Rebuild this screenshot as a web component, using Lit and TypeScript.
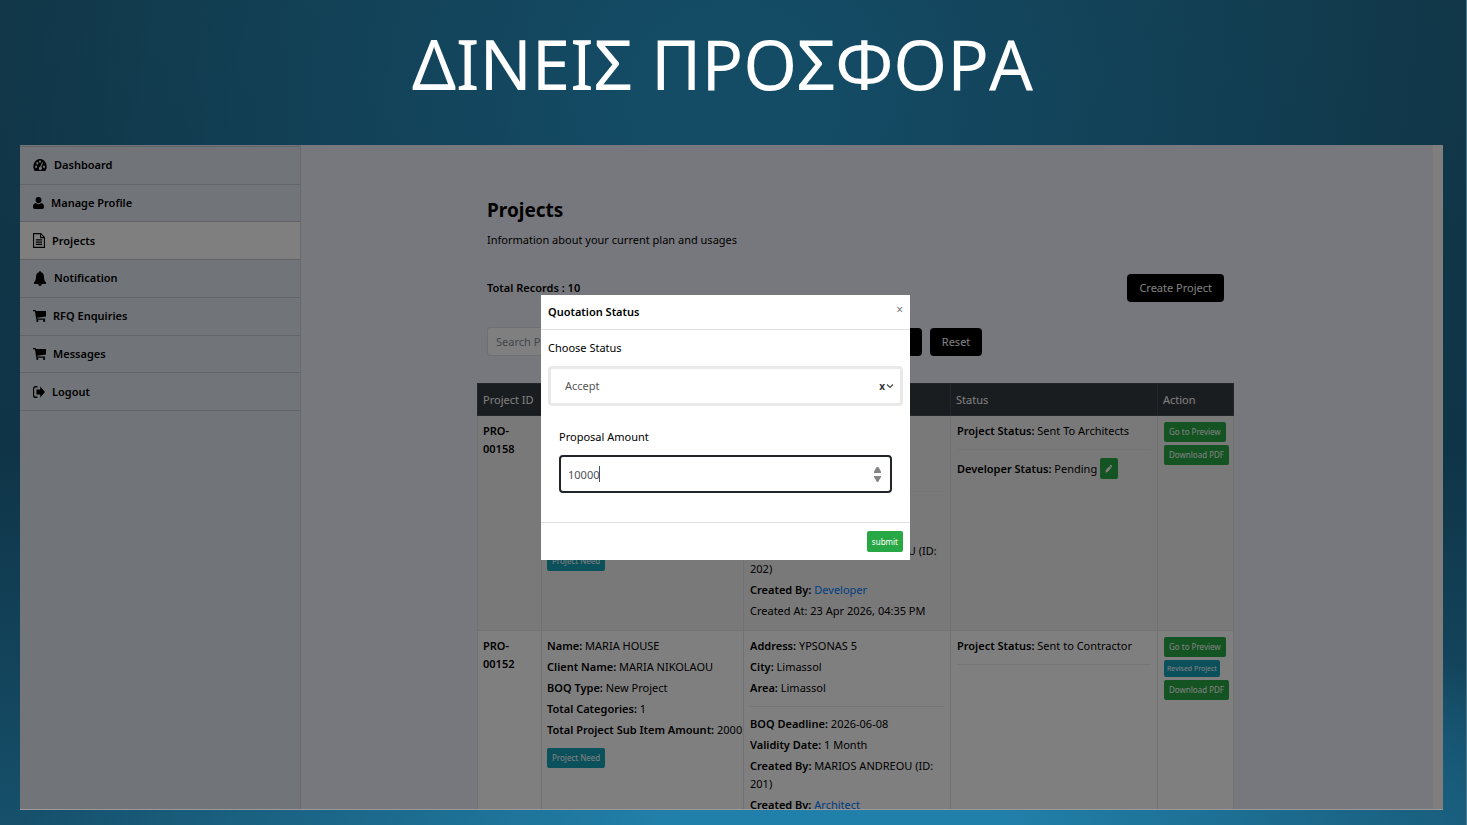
import { LitElement, html, css, svg, nothing } from "lit";
import { customElement, state } from "lit/decorators.js";

const icons = {
  gauge: {
    box: "0 2 16 12", w: 14, h: 12,
    art: svg`<path fill-rule="evenodd" d="M8 2a7.600 7.600 0 0 0-6.500 11.500c.2.300.4.500.8.500h11.400c.4 0 .6-.2.8-.5A7.600 7.600 0 0 0 8 2zM3.500 8.600a1.200 1.200 0 1 1 0 2.400 1.200 1.200 0 0 1 0-2.400zM4.900 5a1.200 1.200 0 1 1 0 2.400 1.200 1.200 0 0 1 0-2.400zM8 3.400a1.200 1.200 0 1 1 0 2.400 1.200 1.200 0 0 1 0-2.400zM12.500 8.600a1.200 1.200 0 1 1 0 2.400 1.200 1.200 0 0 1 0-2.400zM10.500 5.300l1 .4-2 4.400a1.700 1.700 0 1 1-1.300-.4z"/>`,
  },
  user: {
    box: "1.500 1 13 14", w: 11, h: 12,
    art: svg`<path d="M8 1a3.500 3.500 0 0 1 3.500 3.600C11.500 6.700 10 8.400 8 8.400S4.500 6.700 4.500 4.600A3.500 3.500 0 0 1 8 1zM5 8a4.300 4.300 0 0 0 6 0c2.600.3 3.500 2.300 3.500 4.700 0 1.300-.9 2.300-2.100 2.300H3.600c-1.200 0-2.100-1-2.100-2.300C1.500 10.300 2.400 8.300 5 8z"/>`,
  },
  file: {
    box: "1.400 .2 13.200 15.600", w: 12, h: 15,
    art: svg`<path fill="none" stroke="currentColor" stroke-width="1.200" d="M2 .8h8l4 4v10.400H2zM9.800 1v4H14M4.500 7.300h7M4.500 9.700h7M4.500 12.100h7"/>`,
  },
  bell: {
    box: "0 0 16 15.700", w: 14, h: 15,
    art: svg`<path d="M8 0c.7 0 1.100.5 1 1.200 2.300.5 3.600 2.300 3.600 4.800 0 3.400 1 5 2.600 6.300 0 .7-.5 1.200-1.200 1.200h-4A2 2 0 0 1 8 15.700a2 2 0 0 1-2-2.200H2c-.7 0-1.200-.5-1.200-1.200C2.400 11 3.400 9.400 3.400 6c0-2.500 1.300-4.300 3.600-4.800C6.900.5 7.300 0 8 0z"/>`,
  },
  cart: {
    box: ".5 1.500 15 13.500", w: 13, h: 12,
    art: svg`<path d="M.5 1.500h2.700c.5 0 .7.400.8 1.100h11.500v6.200L5.300 10.100l.2 1.100h9v1.200H4.300L2.700 2.800H.5zM5.500 12.600a1.200 1.200 0 1 1 0 2.400 1.200 1.200 0 0 1 0-2.400zM13.300 12.600a1.200 1.200 0 1 1 0 2.400 1.200 1.200 0 0 1 0-2.400z"/>`,
  },
  logout: {
    box: ".8 1.800 14.500 11.900", w: 12, h: 12,
    art: svg`<path fill="none" stroke="currentColor" stroke-width="1.400" d="M6.200 2.500H3.600A2.100 2.100 0 0 0 1.500 4.600v6.300A2.100 2.100 0 0 0 3.600 13h2.600"/><path d="M9.500 2.300l5.800 5.500-5.800 5.500V10.300H5V5.300h4.500z"/>`,
  },
  pencil: {
    box: "1 0 15 15", w: 8, h: 9,
    art: svg`<path d="M2 14l.6-3.800 6.600-6.600 3.200 3.200-6.600 6.600zM10 2.800l1-1c.5-.5 1-.5 1.500 0L14.200 3.500c.5.500.5 1 0 1.500l-1 1z"/>`,
  },
  chevron: {
    box: "0 0 16 16", w: 8, h: 8,
    art: svg`<path fill="none" stroke="currentColor" stroke-width="2.400" d="M2 5l6 6 6-6"/>`,
  },
  up: { box: "2 2 12 12", w: 7, h: 6, art: svg`<path d="M6.500 2h3L14 11v3H2v-3z"/>` },
  down: { box: "2 2 12 12", w: 7, h: 6, art: svg`<path d="M9 14H7L2 4V2h12v2z"/>` },
};
type IconName = keyof typeof icons;
const icon = (name: IconName) => {
  const { box, w, h, art } = icons[name];
  return html`<svg
    class="icon"
    viewBox=${box}
    width=${w}
    height=${h}
    preserveAspectRatio="none"
    fill="currentColor"
    aria-hidden="true"
  >${art}</svg>`;
};

const menu: { label: string; icon: IconName; active?: boolean }[] = [
  { label: "Dashboard", icon: "gauge" },
  { label: "Manage Profile", icon: "user" },
  { label: "Projects", icon: "file", active: true },
  { label: "Notification", icon: "bell" },
  { label: "RFQ Enquiries", icon: "cart" },
  { label: "Messages", icon: "cart" },
  { label: "Logout", icon: "logout" },
];

interface Project {
  id: string;
  summary: [string, string][];
  place: [string, string][];
  dates: [string, string][];
  role: string;
  createdAt?: string;
  status: string;
  developer?: string;
  revised?: boolean;
}

const projects: Project[] = [
  {
    id: "PRO-00158",
    summary: [
      ["Name", "MARIA HOUSE"],
      ["Client Name", "MARIA NIKOLAOU"],
      ["BOQ Type", "New Project"],
      ["Total Categories", "1"],
      ["Total Project Sub Item Amount", "200000"],
    ],
    place: [["Address", "YPSONAS 5"], ["City", "Limassol"], ["Area", "Limassol"]],
    dates: [
      ["BOQ Deadline", "2026-06-08"],
      ["Validity Date", "1 Month"],
      ["Created By", "MARIOS NIKOLAOU (ID: 202)"],
    ],
    role: "Developer",
    createdAt: "23 Apr 2026, 04:35 PM",
    status: "Sent To Architects",
    developer: "Pending",
  },
  {
    id: "PRO-00152",
    summary: [
      ["Name", "MARIA HOUSE"],
      ["Client Name", "MARIA NIKOLAOU"],
      ["BOQ Type", "New Project"],
      ["Total Categories", "1"],
      ["Total Project Sub Item Amount", "2000"],
    ],
    place: [["Address", "YPSONAS 5"], ["City", "Limassol"], ["Area", "Limassol"]],
    dates: [
      ["BOQ Deadline", "2026-06-08"],
      ["Validity Date", "1 Month"],
      ["Created By", "MARIOS ANDREOU (ID: 201)"],
    ],
    role: "Architect",
    status: "Sent to Contractor",
    revised: true,
  },
];

@customElement("side-menu")
class SideMenu extends LitElement {
  static styles = css`
    :host {
      display: block;
      background: #e2e9f2;
      border-right: 1px solid #d2d6dc;
      padding-top: 1px;
    }
    .list {
      display: grid;
      grid-auto-rows: 1fr;
      height: 264px;
      margin: 0;
      padding: 0;
      list-style: none;
      border-top: 1px solid #c4c9cf;
    }
    .item {
      display: grid;
      border-bottom: 1px solid #c4c9cf;
    }
    .link {
      display: flex;
      align-items: center;
      gap: 7px;
      padding-left: 13px;
      color: #000;
      font-size: 11px;
      font-weight: 600;
      line-height: 18px;
      text-decoration: none;
    }
    .active {
      background: #fff;
    }
  `;
  render() {
    return html`<nav aria-label="Main">
      <ul class="list">
        ${menu.map(
          (m) => html`<li class="item">
            <a class="link ${m.active ? "active" : ""}" href="#">${icon(m.icon)}<span>${m.label}</span></a>
          </li>`
        )}
      </ul>
    </nav>`;
  }
}

@customElement("project-table")
class ProjectTable extends LitElement {
  static styles = css`
    :host {
      display: block;
    }
    .table {
      width: 100%;
      table-layout: fixed;
      border-collapse: collapse;
      font-size: 11px;
      line-height: 18px;
      color: #000;
      background: #fff;
    }
    b {
      font-weight: 600;
    }
    .c-id { width: 64px; }
    .c-status { width: 207px; }
    .c-place { width: 207px; }
    .c-action { width: 76px; }
    .head {
      height: 19px;
      padding: 6px 5px;
      background: #343a40;
      border: 1px solid #454d55;
      color: #fff;
      font-weight: 400;
      text-align: left;
      white-space: nowrap;
    }
    .cell {
      padding: 6px 6px 7px;
      border: 1px solid #dee2e6;
      vertical-align: top;
      text-align: left;
    }
    .code,
    .sum {
      padding-left: 5px;
      font-weight: 600;
    }
    .sum {
      padding-right: 0;
      font-weight: 400;
    }
    .odd { background: #f2f2f2; }
    .line {
      margin: 0 0 3px;
    }
    .rule {
      margin: 9px 0 8px;
      border: 0;
      border-top: 1px solid #ebebeb;
    }
    .link {
      color: #007bff;
      text-decoration: none;
    }
    .need,
    .go,
    .rev,
    .edit {
      display: block;
      box-sizing: border-box;
      height: 20px;
      margin: 0 0 3px;
      padding: 0 5px;
      border: 0;
      border-radius: 2px;
      background: #28a745;
      color: #fff;
      font: 8px/20px "Noto Sans", sans-serif;
      white-space: nowrap;
    }
    .need {
      margin-top: 9px;
      background: #17a2b8;
    }
    .rev {
      height: 17px;
      padding: 0 3px;
      background: #17a2b8;
      font-size: 7px;
      line-height: 17px;
    }
    .dev {
      display: flex;
      align-items: center;
      gap: 3px;
      margin: 0;
    }
    .edit {
      width: 18px;
      height: 21px;
      margin: 0;
    }
    .icon {
      display: block;
    }
  `;
  private lines(items: [string, string][]) {
    return items.map(([k, v]) => html`<p class="line"><b>${k}:</b> ${v}</p>`);
  }
  render() {
    return html`<table class="table">
      <colgroup>
        <col class="c-id" /><col /><col class="c-place" /><col class="c-status" /><col class="c-action" />
      </colgroup>
      <thead>
        <tr>
          ${["Project ID", "Project", "Details", "Status", "Action"].map(
            (h) => html`<th class="head" scope="col">${h}</th>`
          )}
        </tr>
      </thead>
      <tbody>
        ${projects.map(
          (p, i) => html`<tr class=${i % 2 ? "even" : "odd"}>
            <th class="cell code" scope="row">${p.id}</th>
            <td class="cell sum">
              ${this.lines(p.summary)}
              <button class="need" type="button">Project Need</button>
            </td>
            <td class="cell">
              ${this.lines(p.place)}
              <hr class="rule" />
              ${this.lines(p.dates)}
              <p class="line"><b>Created By:</b> <a class="link" href="#">${p.role}</a></p>
              ${p.createdAt ? html`<p class="line">Created At: ${p.createdAt}</p>` : nothing}
            </td>
            <td class="cell">
              ${this.lines([["Project Status", p.status]])}
              <hr class="rule" />
              ${p.developer
                ? html`<div class="dev">
                    <span><b>Developer Status:</b> ${p.developer}</span>
                    <button class="edit" type="button" aria-label="Edit status">${icon("pencil")}</button>
                  </div>`
                : nothing}
            </td>
            <td class="cell">
              <button class="go" type="button">Go to Preview</button>
              ${p.revised ? html`<button class="rev" type="button">Revised Project</button>` : nothing}
              <button class="go" type="button">Download PDF</button>
            </td>
          </tr>`
        )}
      </tbody>
    </table>`;
  }
}

@customElement("quotation-dialog")
class QuotationDialog extends LitElement {
  @state() private amount = "10000";

  static styles = css`
    :host {
      display: block;
      width: 369px;
      background: #fff;
      color: #000;
      font-size: 11px;
      line-height: 18px;
    }
    .top {
      display: flex;
      justify-content: space-between;
      align-items: flex-start;
      padding: 8px 7px;
      border-bottom: 1px solid #dee2e6;
    }
    .title {
      margin: 0;
      font-size: 11px;
      font-weight: 600;
      line-height: 18px;
    }
    .close {
      padding: 0;
      border: 0;
      background: none;
      color: #777;
      font: 12px/14px "Noto Sans", sans-serif;
    }
    .body {
      padding: 9px 7px 29px;
    }
    .label {
      display: block;
    }
    .choice {
      display: flex;
      align-items: center;
      margin-top: 9px;
      padding: 0 6px 0 14px;
      border: 3px solid #e9e9e9;
      border-radius: 4px;
      color: #444;
    }
    .select {
      flex: 1;
      height: 34px;
      padding: 0;
      border: 0;
      background: none;
      appearance: none;
      color: #555;
      font: 11px/18px "Noto Sans", sans-serif;
    }
    .clear {
      margin-right: 1px;
      padding: 0;
      border: 0;
      background: none;
      color: #333;
      font: 700 10px/18px "Noto Sans", sans-serif;
    }
    .amount {
      padding: 22px 11px 0;
    }
    .box {
      display: flex;
      align-items: center;
      margin-top: 9px;
      padding: 0 9px 0 7px;
      border: 2px solid #212529;
      border-radius: 4px;
    }
    .field {
      display: grid;
      flex: 1;
      align-items: center;
    }
    .input {
      grid-area: 1 / 1;
      width: 100%;
      height: 34px;
      padding: 0;
      border: 0;
      outline: 0;
      background: none;
      color: #495057;
      font: 11px/18px "Noto Sans", sans-serif;
    }
    .caret {
      grid-area: 1 / 1;
      justify-self: start;
      width: 31px;
      height: 16px;
      border-right: 1px solid #495057;
      pointer-events: none;
    }
    .spin {
      display: grid;
      gap: 3px;
    }
    .step {
      display: block;
      padding: 0;
      border: 0;
      background: none;
      color: #858585;
    }
    .icon {
      display: block;
    }
    .foot {
      display: flex;
      justify-content: flex-end;
      padding: 8px 7px;
      border-top: 1px solid #dee2e6;
    }
    .submit {
      height: 21px;
      padding: 0 5px;
      border: 0;
      border-radius: 2px;
      background: #28a745;
      color: #fff;
      font: 8px/21px "Noto Sans", sans-serif;
    }
  `;
  private bump(by: number) {
    this.amount = String(Number(this.amount) + by);
  }
  render() {
    return html`<form role="dialog" aria-labelledby="title" @submit=${(e: Event) => e.preventDefault()}>
      <div class="top">
        <h2 class="title" id="title">Quotation Status</h2>
        <button class="close" type="button" aria-label="Close">×</button>
      </div>
      <div class="body">
        <label class="label" for="status">Choose Status</label>
        <div class="choice">
          <select class="select" id="status">
            <option>Accept</option>
          </select>
          <button class="clear" type="button" aria-label="Clear">x</button>
          ${icon("chevron")}
        </div>
        <div class="amount">
          <label class="label" for="amount">Proposal Amount</label>
          <div class="box">
            <div class="field">
              <input
                class="input"
                id="amount"
                inputmode="numeric"
                .value=${this.amount}
                @input=${(e: InputEvent) => (this.amount = (e.target as HTMLInputElement).value)}
              />
              <span class="caret" aria-hidden="true"></span>
            </div>
            <div class="spin">
              <button class="step" type="button" aria-label="Increase" @click=${() => this.bump(1)}>${icon("up")}</button>
              <button class="step" type="button" aria-label="Decrease" @click=${() => this.bump(-1)}>${icon("down")}</button>
            </div>
          </div>
        </div>
      </div>
      <div class="foot"><button class="submit" type="submit">submit</button></div>
    </form>`;
  }
}

@customElement("app-root")
class AppRoot extends LitElement {
  static styles = css`
    :host {
      display: grid;
      grid-template-rows: auto minmax(0, 1fr);
      box-sizing: border-box;
      height: 100vh;
      padding: 0 23px 15px 20px;
      border-right: 1px solid #4d7c90;
      background:
        radial-gradient(ellipse 56% 30% at 57% 100%, #2180aa 20%, rgba(33, 128, 170, 0) 100%),
        radial-gradient(ellipse 50% 80% at 50% 12%, #144c66 10%, rgba(20, 76, 102, 0) 100%),
        linear-gradient(#113748, #0f3447 55%, #16506b);
      font-family: "Noto Sans", sans-serif;
    }
    .heading {
      margin: 0;
      padding: 15px 18px 34px 0;
      color: #fff;
      font-size: 69px;
      font-weight: 400;
      line-height: 96px;
      text-align: center;
    }
    .panel {
      position: relative;
      display: grid;
      grid-template-columns: 281px minmax(0, 1fr) 10px;
      overflow: hidden;
      background: #eff1fa;
      border-bottom: 1px solid #9a9a9c;
    }
    .main {
      padding: 51px 199px 0 176px;
      overflow: hidden;
      font-size: 11px;
      line-height: 18px;
    }
    .intro {
      padding: 0 10px;
    }
    .name {
      margin: 0;
      font-size: 19px;
      line-height: 28px;
    }
    .lead {
      margin: 7px 0 25px;
    }
    .row {
      display: flex;
      align-items: center;
      justify-content: space-between;
    }
    .total {
      font-weight: 600;
    }
    .btn {
      height: 28px;
      padding: 0 12px;
      border: 0;
      border-radius: 4px;
      background: #000;
      color: #fff;
      font: 11px/28px "Noto Sans", sans-serif;
    }
    .filters {
      display: flex;
      align-items: center;
      gap: 8px;
      margin: 25px 0 27px;
    }
    .search {
      box-sizing: border-box;
      width: 368px;
      height: 29px;
      padding: 0 8px;
      border: 1px solid #dcdfe4;
      border-radius: 3px;
      background: #fff;
      font: 11px/18px "Noto Sans", sans-serif;
    }
    .search::placeholder {
      color: #868e96;
    }
    .track {
      background: #fffcf8;
    }
    .backdrop {
      position: absolute;
      inset: 0;
      display: grid;
      justify-content: center;
      align-content: start;
      padding: 150px 12px 0 0;
      background: rgba(0, 0, 0, 0.5);
    }
  `;
  render() {
    return html`
      <h1 class="heading">ΔΙΝΕΙΣ ΠΡΟΣΦΟΡΑ</h1>
      <div class="panel">
        <side-menu></side-menu>
        <main class="main">
          <div class="intro">
            <h2 class="name">Projects</h2>
            <p class="lead">Information about your current plan and usages</p>
            <div class="row">
              <b class="total">Total Records : 10</b>
              <button class="btn" type="button">Create Project</button>
            </div>
            <div class="filters">
              <input class="search" type="search" aria-label="Search projects" placeholder="Search Projects" />
              <button class="btn" type="button">Search</button>
              <button class="btn" type="button">Reset</button>
            </div>
          </div>
          <project-table></project-table>
        </main>
        <div class="track"></div>
        <div class="backdrop"><quotation-dialog></quotation-dialog></div>
      </div>
    `;
  }
}
